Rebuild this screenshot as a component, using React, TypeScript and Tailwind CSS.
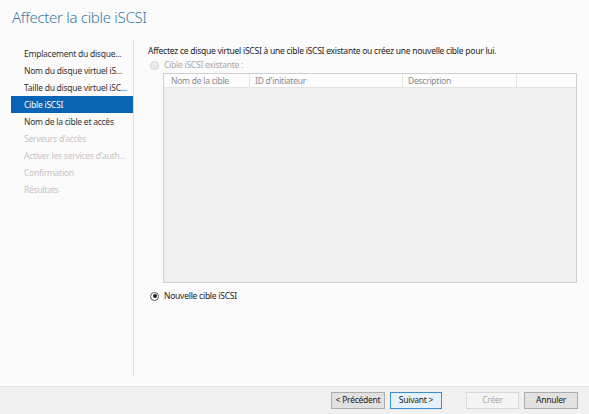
export default function App() {
  const steps = [
    { label: 'Emplacement du disque...', state: 'done' },
    { label: 'Nom du disque virtuel iS...', state: 'done' },
    { label: 'Taille du disque virtuel iSC...', state: 'done' },
    { label: 'Cible iSCSI', state: 'active' },
    { label: 'Nom de la cible et accès', state: 'done' },
    { label: "Serveurs d'accès", state: 'off' },
    { label: "Activer les services d'auth...", state: 'off' },
    { label: 'Confirmation', state: 'off' },
    { label: 'Résultats', state: 'off' },
  ];

  return (
    <div className="w-[589px] h-[414px] bg-[#fbfbfb] flex flex-col overflow-hidden tracking-[-0.25px]" style={{ fontFamily: '"Noto Sans", "Open Sans", sans-serif' }}>
      {/* Title */}
      <div className="pl-[12px] pt-[7px] h-[40px]">
        <h1 className="text-[15px] font-light text-[#3b7aa3] leading-[20px] tracking-[-0.3px]">Affecter la cible iSCSI</h1>
      </div>

      {/* Body */}
      <div className="flex flex-1">
        {/* Steps */}
        <div className="w-[134px] pl-[11px] pt-[5px] border-r border-[#dcdcdc] mb-[10px]">
          {steps.map((s) => (
            <div
              key={s.label}
              className={
                'h-[17px] pl-[13px] text-[8.5px] leading-[17px] whitespace-nowrap ' +
                (s.state === 'active'
                  ? 'bg-[#0a64b4] text-white'
                  : s.state === 'off'
                  ? 'text-[#c4c4c4]'
                  : 'text-[#333333]')
              }
            >
              {s.label}
            </div>
          ))}
        </div>

        {/* Content */}
        <div className="flex-1 pl-[14px] pr-[12px] pt-[5px]">
          <p className="text-[8.5px] leading-[12px] text-[#222222]">
            Affectez ce disque virtuel iSCSI à une cible iSCSI existante ou créez une nouvelle cible pour lui.
          </p>
          <div className="flex items-center gap-[5px] mt-[2px] h-[12px] pl-[2px]">
            <span className="w-[9px] h-[9px] rounded-full border border-[#d0d0d0] bg-[#ececec]" />
            <span className="text-[8.5px] text-[#a8a8a8]">Cible iSCSI existante :</span>
          </div>

          {/* Table */}
          <div className="ml-[15px] mt-[2px] w-[414px] h-[210px] border border-[#cfcfcf] bg-[#f0f0f0] flex flex-col">
            <div className="flex h-[14px] bg-[#fdfdfd] border-b border-[#e4e4e4] text-[8.5px] text-[#8a8a8a] leading-[13px]">
              <div className="w-[86px] pl-[7px] border-r border-[#e4e4e4]">Nom de la cible</div>
              <div className="w-[153px] pl-[5px] border-r border-[#e4e4e4]">ID d'initiateur</div>
              <div className="w-[114px] pl-[5px] border-r border-[#e4e4e4]">Description</div>
              <div className="flex-1" />
            </div>
          </div>

          <div className="flex items-center gap-[5px] mt-[7px] h-[12px] pl-[2px]">
            <span className="w-[9px] h-[9px] rounded-full border border-[#5a5a5a] bg-white flex items-center justify-center">
              <span className="w-[4px] h-[4px] rounded-full bg-[#222222]" />
            </span>
            <span className="text-[8.5px] text-[#222222]">Nouvelle cible iSCSI</span>
          </div>
        </div>
      </div>

      {/* Footer */}
      <div className="h-[28px] bg-[#f0f0f0] border-t border-[#e2e2e2] flex items-center justify-end pr-[11px] text-[8.5px]">
        <button className="w-[54px] h-[17px] bg-[#e1e1e1] border border-[#adadad] text-[#222222]">&lt; Précédent</button>
        <button className="ml-[5px] w-[52px] h-[17px] bg-[#e5f1fb] border border-[#3c8cd2] text-[#222222]">Suivant &gt;</button>
        <button className="ml-[24px] w-[53px] h-[17px] bg-[#f4f4f4] border border-[#d9d9d9] text-[#a8a8a8]">Créer</button>
        <button className="ml-[5px] w-[54px] h-[17px] bg-[#e1e1e1] border border-[#adadad] text-[#222222]">Annuler</button>
      </div>
    </div>
  );
}
